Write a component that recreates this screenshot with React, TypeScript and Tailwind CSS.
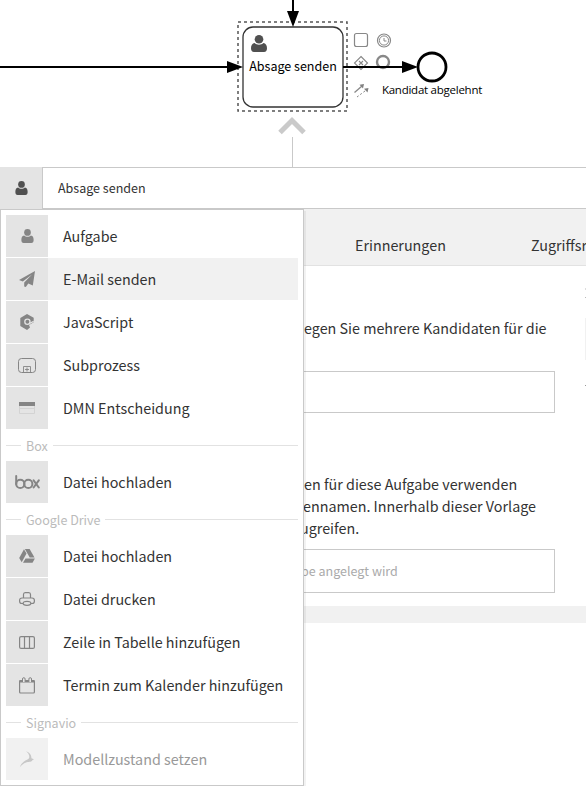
import type { ReactNode } from "react";

const UserIcon = ({ className }: { className: string }) => (
  <svg viewBox="0 0 16 18" className={className} fill="currentColor">
    <circle cx="8" cy="4.4" r="4.3" />
    <path d="M3.600 8.300C1.200 8.600.1 10.600.1 14c0 2.400 1 3.900 2.900 3.900h10c1.900 0 2.900-1.500 2.900-3.900 0-3.400-1.100-5.400-3.500-5.700C11.300 9.300 9.800 10 8 10S4.700 9.300 3.600 8.300z" />
  </svg>
);

const PlaneIcon = () => (
  <svg viewBox="0 0 16 16" className="h-4 w-4" fill="currentColor">
    <path d="M16 0 13.800 14.400 9.300 12.600 6.800 16 5.200 15.600V11.400L13 3.400 3.800 10.600 0 9z" />
  </svg>
);

const ScriptIcon = () => (
  <svg viewBox="0 0 16 16" className="h-4 w-4">
    <path d="M8 0 14.700 3.800V8.200L10 11 11 13.500 8 16 1.300 12V4z" fill="currentColor" />
    <circle cx="8.400" cy="7.800" r="2.600" fill="currentColor" stroke="#e4e4e4" strokeWidth="1.300" />
    <path d="M9.800 9.800 14.700 7.400" stroke="#e4e4e4" strokeWidth="1.200" />
  </svg>
);

const SubprocessIcon = () => (
  <svg viewBox="0 0 18 15" className="h-[15px] w-[18px]" fill="none" stroke="currentColor">
    <rect x=".5" y=".5" width="17" height="14" rx="3" strokeWidth="1" />
    <path d="M5.500 14.500v-6h7v6M9 9.500v4M7 11.500h4" strokeWidth=".9" />
  </svg>
);

const TableRuleIcon = () => (
  <svg viewBox="0 0 16 12" className="h-3 w-4">
    <rect width="16" height="4" fill="currentColor" />
    <path d="M.5 4v7.500h15V4M.5 6.500h15" fill="none" stroke="#d3d3d3" />
  </svg>
);

const BoxIcon = () => (
  <svg viewBox="0 0 25 14" className="h-3.5 w-[25px]" fill="none" stroke="currentColor" strokeWidth="2" strokeLinecap="round">
    <path d="M1.200 1v8" />
    <circle cx="5.300" cy="8.900" r="4.100" />
    <circle cx="13.300" cy="8.900" r="4.100" />
    <path d="m18.600 5.300 5.200 7.200M23.800 5.300l-5.200 7.200" />
  </svg>
);

const DriveIcon = () => (
  <svg viewBox="0 0 16 14" className="h-3.5 w-4" fill="currentColor">
    <path d="M5 .3 7.500 4.500 2.700 13.200.2 9z" />
    <path d="M5.900 0h4.700l4.900 8.500h-4.800z" />
    <path d="M6.500 9.400h9.400L13.500 13.800H4z" />
  </svg>
);

const PrinterIcon = () => (
  <svg viewBox="0 0 16 14" className="h-3.5 w-4" fill="none" stroke="currentColor" strokeWidth="1.200">
    <path d="M4.500 6V2.500Q4.500.6 6.200.6h3.600q1.700 0 1.700 1.900V6" />
    <path d="M4.200 11.500H3Q.6 11.500.6 9.200V8.400Q.6 6 3 6h10q2.400 0 2.400 2.400v.8q0 2.300-2.400 2.300h-1.200" />
    <ellipse cx="8" cy="11.300" rx="3.900" ry="2" />
  </svg>
);

const ColumnsIcon = () => (
  <svg viewBox="0 0 16 13" className="h-[13px] w-4" fill="none" stroke="currentColor" strokeWidth="1.200">
    <rect x=".6" y=".6" width="14.800" height="11.800" rx="1.500" />
    <path d="M5.500.5v12M10.500.5v12" />
  </svg>
);

const CalendarIcon = () => (
  <svg viewBox="0 0 16 17" className="h-[17px] w-4" fill="none" stroke="currentColor">
    <rect x=".6" y="3.500" width="14.800" height="12.500" rx="1" strokeWidth="1.200" />
    <path d="M.5 4.300h15" strokeWidth="2.400" />
    <path d="M3.500 5V2a1.300 1.300 0 0 1 2.600 0v3M9.900 5V2a1.300 1.300 0 0 1 2.600 0v3" fill="#e4e4e4" strokeWidth="1" />
  </svg>
);

const SignavioIcon = () => (
  <svg viewBox="0 0 16 17" className="h-[17px] w-4" fill="currentColor">
    <path d="M7 .3C10.500 1.300 12.600 4 12.400 7.300L15 8.200 13.400 9.200C12 11.600 9.500 10.400 7 11.400 4.500 12.400 2.500 14 .8 16.300 2 12.700 4.800 10.200 8 8.800 9.300 8.200 10.200 7.600 10.300 6.300 10.500 4 9.300 1.900 7 .3z" />
  </svg>
);

type Entry = { label: string; icon: ReactNode; active?: boolean; disabled?: boolean };
type Group = { title?: string; entries: Entry[] };

const groups: Group[] = [
  {
    entries: [
      { label: "Aufgabe", icon: <UserIcon className="h-3.5 w-[13px]" /> },
      { label: "E-Mail senden", icon: <PlaneIcon />, active: true },
      { label: "JavaScript", icon: <ScriptIcon /> },
      { label: "Subprozess", icon: <SubprocessIcon /> },
      { label: "DMN Entscheidung", icon: <TableRuleIcon /> },
    ],
  },
  { title: "Box", entries: [{ label: "Datei hochladen", icon: <BoxIcon /> }] },
  {
    title: "Google Drive",
    entries: [
      { label: "Datei hochladen", icon: <DriveIcon /> },
      { label: "Datei drucken", icon: <PrinterIcon /> },
      { label: "Zeile in Tabelle hinzufügen", icon: <ColumnsIcon /> },
      { label: "Termin zum Kalender hinzufügen", icon: <CalendarIcon /> },
    ],
  },
  { title: "Signavio", entries: [{ label: "Modellzustand setzen", icon: <SignavioIcon />, disabled: true }] },
];

function Diagram() {
  return (
    <svg viewBox="0 0 586 167" className="block h-[167px] w-full shrink-0">
      <path d="M292.500 137v30" stroke="#c9c9c9" />
      <path d="m280 132.500 12-12 12 12" fill="none" stroke="#cacaca" strokeWidth="5" />
      <rect x="238" y="22" width="109" height="89" fill="none" stroke="#555" strokeWidth="1.500" strokeDasharray="3 3" />
      <rect x="243" y="27" width="100" height="80" rx="10" fill="#fff" stroke="#333" strokeWidth="1.300" />
      <path d="M293 0v14M0 67h230" stroke="#000" strokeWidth="2" />
      <path d="M287 11h12l-6 16zM227 61v12l16-6z" />
      <g fill="#505050" transform="translate(251 35)">
        <circle cx="8" cy="4.300" r="4.300" />
        <path d="M3.600 8C1.200 8.300 0 10.300 0 13.300 0 15.700 1 17 3 17h10c2 0 3-1.300 3-3.700 0-3-1.200-5-3.600-5.300C11.300 9 9.800 9.700 8 9.700S4.700 9 3.600 8z" />
      </g>
      <g fill="none" stroke="#888">
        <rect x="354.500" y="33.500" width="13" height="13" rx="2" strokeWidth="1.200" />
        <circle cx="384" cy="40.500" r="6.500" strokeWidth="1.200" />
        <circle cx="384" cy="40.500" r="4.600" />
        <path d="M384 38v3h2.500" />
        <path d="m361 56.500 6.500 6.500-6.500 6.500-6.500-6.500zM359 61l4 4M363 61l-4 4" strokeWidth="1.100" />
        <circle cx="383" cy="62" r="6" strokeWidth="2.400" />
        <path d="M354.500 92.500 362 86" strokeWidth="1.300" />
        <path d="m357 97 8-6" strokeDasharray="2 2" />
      </g>
      <path d="m364 84-1 4.500-3.500-3.700zM368.500 88l-1 4.500-3.500-3.700z" fill="#808080" />
      <path d="M343 67h62" stroke="#000" strokeWidth="2" />
      <path d="M402 61v12l16-6z" />
      <circle cx="432" cy="67" r="14" fill="#fff" stroke="#000" strokeWidth="2.800" />
      <text x="293" y="71" textAnchor="middle" className="font-['Noto_Sans_CJK_SC',sans-serif] text-[12.530px]">Absage senden</text>
      <text x="432" y="94" textAnchor="middle" className="font-['Open_Sans',sans-serif] text-[11.500px] tracking-[-0.250px]">Kandidat abgelehnt</text>
    </svg>
  );
}

function TypeMenu() {
  return (
    <div className="absolute left-0 top-[209px] z-10 h-[577px] w-[304px] border border-[#c9c9c9] bg-white p-[5px] shadow-[2px_2px_0_rgba(0,0,0,0.05)]">
      {groups.map((group, i) => (
        <div key={i}>
          {group.title && (
            <div className="flex h-[31px] items-center">
              <span className="h-px w-[15px] bg-[#e2e2e2]" />
              <span className="px-[5px] pt-px text-[12.530px] leading-none text-[#bbb]">{group.title}</span>
              <span className="h-px flex-1 bg-[#e2e2e2]" />
            </div>
          )}
          {group.entries.map((entry) => (
            <div key={entry.label} className={`mb-px flex h-[42px] items-center ${entry.active ? "bg-[#f1f1f1]" : ""}`}>
              <span className={`flex h-full w-[42px] shrink-0 items-center justify-center ${entry.disabled ? "bg-[#f1f1f1] text-[#c7c7c7]" : "bg-[#e4e4e4] text-[#858585]"}`}>
                {entry.icon}
              </span>
              <span className={`whitespace-nowrap pl-[15px] ${entry.disabled ? "text-[#999]" : "text-[#333]"}`}>{entry.label}</span>
            </div>
          ))}
        </div>
      ))}
    </div>
  );
}

export default function App() {
  return (
    <div className="relative flex h-[786px] w-[586px] flex-col overflow-hidden bg-white font-['Noto_Sans_CJK_SC',sans-serif] text-[14.330px] leading-[22px] text-[#333]">
      <Diagram />
      <header className="flex h-[42px] shrink-0">
        <div className="flex w-[42px] items-center justify-center bg-[#e4e4e4] text-[#505050]">
          <UserIcon className="h-3.5 w-[13px]" />
        </div>
        <div className="flex flex-1 items-center border-y border-l border-[#c9c9c9] pl-[15px] text-[12.530px]">Absage senden</div>
      </header>
      <nav className="flex h-[57px] shrink-0 items-center whitespace-nowrap border-b border-[#e2e2e2] bg-[#f1f1f1] pl-[355px] pt-4">
        <span className="w-[176px] shrink-0">Erinnerungen</span>
        <span>Zugriffsrechte</span>
      </nav>
      <main className="flex h-[340px] shrink-0">
        <div className="flex w-[585px] flex-col whitespace-nowrap pl-[304px] pr-[30px]">
          <p className="mt-[51px]">egen Sie mehrere Kandidaten für die</p>
          <div className="mt-8 h-[42px] border border-l-0 border-[#c9c9c9]" />
          <div className="-ml-1 mt-[60px]">
            <p className="pl-1">en für diese Aufgabe verwenden</p>
            <p className="pl-[3px]">ennamen. Innerhalb dieser Vorlage</p>
            <p>ugreifen.</p>
          </div>
          <div className="-ml-1 mt-2.5 flex h-11 items-center border border-l-0 border-[#c9c9c9] text-[12.530px] text-[#aaa]">
            <span className="pl-px">be angelegt wird</span>
          </div>
        </div>
        <div className="w-px pt-[22px]">
          <div className="h-0.5 bg-[#ddd]" />
          <div className="mt-[7px] h-px bg-[#bbb]" />
          <div className="mt-5 h-[42px] bg-[#f1f1f1]" />
          <div className="mt-[25px] h-px bg-[#999]" />
        </div>
      </main>
      <div className="h-[17px] shrink-0 bg-[#f1f1f1]" />
      <TypeMenu />
    </div>
  );
}
